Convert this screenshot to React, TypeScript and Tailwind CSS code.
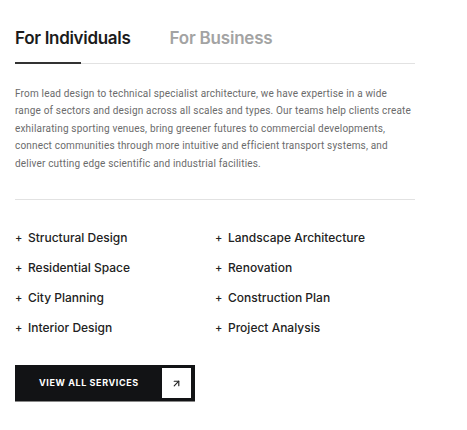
import { ArrowUpRight } from 'lucide-react';

const services = [
  'Structural Design',
  'Landscape Architecture',
  'Residential Space',
  'Renovation',
  'City Planning',
  'Construction Plan',
  'Interior Design',
  'Project Analysis',
];

const intro = [
  'From lead design to technical specialist architecture, we have expertise in a wide',
  'range of sectors and design across all scales and types. Our teams help clients create',
  'exhilarating sporting venues, bring greener futures to commercial developments,',
  'connect communities through more intuitive and efficient transport systems, and',
  'deliver cutting edge scientific and industrial facilities.',
];

export default function App() {
  return (
    <div className="min-h-[430px] bg-white px-[15px] pt-[26px]" style={{ fontFamily: 'Inter, sans-serif' }}>
      <div className="w-[400px]">
        {/* tabs */}
        <div className="relative border-b border-[#e2e2e2]">
          <div className="flex gap-[39px] pb-[11px]">
            <button className="text-[17px] font-semibold tracking-[-0.3px] text-[#1b1b1b]">For Individuals</button>
            <button className="text-[17px] font-semibold tracking-[-0.2px] text-[#a3a3a3]">For Business</button>
          </div>
          <div className="absolute -bottom-px left-0 h-[2px] w-[66px] bg-[#333]" />
        </div>

        <p
          className="mt-[21px] text-[10px] leading-[17.5px] tracking-[0.18px] text-[#6b6b6b]"
          style={{ fontFamily: 'Roboto, sans-serif' }}
        >
          {intro.map((l) => (
            <span key={l} className="block whitespace-nowrap">
              {l}
            </span>
          ))}
        </p>

        <div className="mt-[27px] border-t border-[#e2e2e2]" />

        <ul className="mt-[29px] grid grid-cols-2 gap-y-[12px]">
          {services.map((s) => (
            <li key={s} className="flex h-[18px] items-center text-[12px] font-medium text-[#222]">
              <span className="mr-[7px] w-[6px] text-[11px]">+</span>
              {s}
            </li>
          ))}
        </ul>

        <button className="mt-[28px] flex h-[36px] w-[180px] items-center justify-between bg-[#121315] pl-[24px] pr-[4px] shadow-[0_1px_0_#888]">
          <span className="text-[9px] font-bold tracking-[0.6px] text-white">VIEW ALL SERVICES</span>
          <span className="flex h-[30px] w-[29px] items-center justify-center bg-white">
            <ArrowUpRight className="h-[11px] w-[11px] text-[#222]" strokeWidth={2.5} />
          </span>
        </button>
      </div>
    </div>
  );
}
